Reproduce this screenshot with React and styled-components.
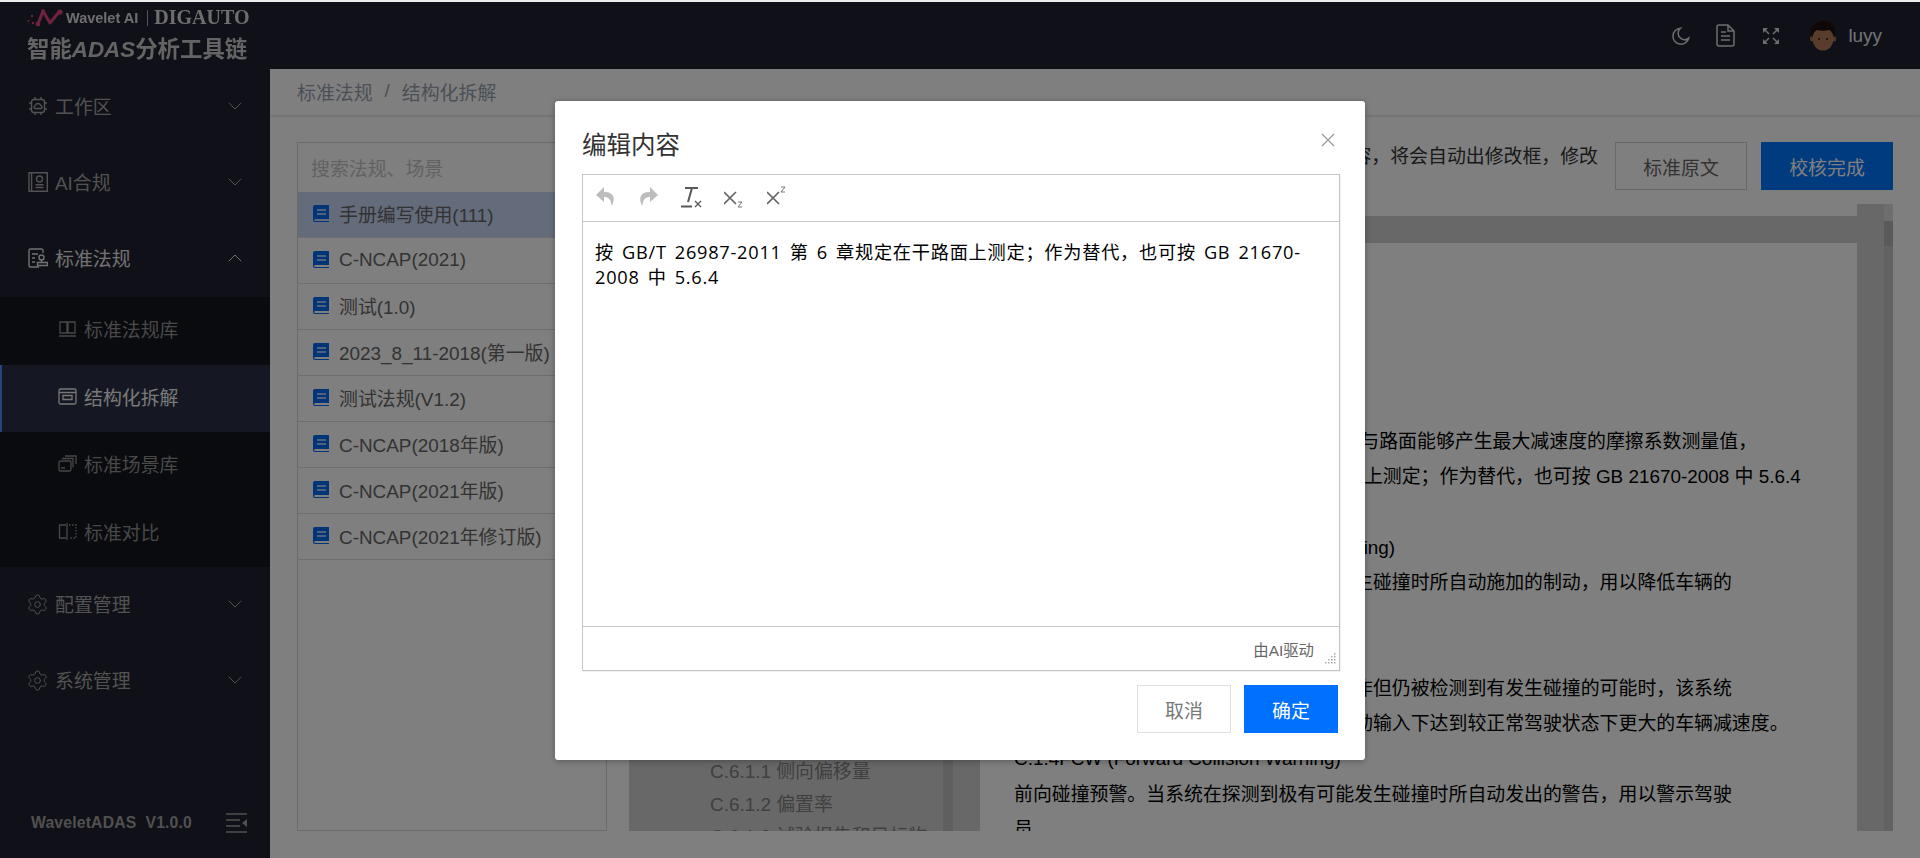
import React from 'react';
import styled, { createGlobalStyle } from 'styled-components';
import { ChevronDown, ChevronUp, Settings } from 'lucide-react';

const sans = `"Liberation Sans", "Noto Sans CJK SC", sans-serif`;

const Global = createGlobalStyle`
  html, body {
    margin: 0;
    height: 100%;
    overflow: hidden;
    background: #fff;
    font-family: ${sans};
  }
  * { box-sizing: border-box; }
`;

const Page = styled.div`
  position: relative;
  height: 858px;
  display: flex;
  flex-direction: column;
  overflow: hidden;
`;
const TopStrip = styled.div`
  height: 2px;
  background: #eeeeee;
  flex: none;
`;
const Header = styled.header`
  height: 67px;
  flex: none;
  background: #202230;
  display: flex;
  align-items: center;
  justify-content: space-between;
`;
const Brand = styled.div`
  padding-left: 27px;
  display: flex;
  flex-direction: column;
  margin-top: -2px;
  filter: blur(0.35px);
`;
const BrandTop = styled.div`
  display: flex;
  align-items: center;
  height: 24px;
  color: #dcdcdc;
`;
const WaveText = styled.span`
  margin-left: 3px;
  font-size: 14.5px;
  font-weight: 700;
`;
const BrandDivider = styled.i`
  width: 1px;
  height: 16px;
  background: #aaa;
  margin: 0 6px 0 9px;
`;
const DigText = styled.span`
  font-family: "Liberation Serif", serif;
  font-size: 20px;
  font-weight: 700;
`;
const BrandTitle = styled.div`
  margin-top: 6px;
  font-size: 22.4px;
  line-height: 28px;
  font-weight: 700;
  color: #c8c8c8;
  white-space: nowrap;
`;
const Tools = styled.div`
  display: flex;
  align-items: center;
  padding-right: 38px;
  color: #e6e6e6;
`;
const ToolIcon = styled.svg`
  flex: none;
  margin-right: ${p => p.$gap}px;
  fill: none;
  stroke: #dcdcdc;
  stroke-width: 1.5;
`;
const Avatar = styled.svg`
  flex: none;
  margin-right: 12px;
`;
const UserName = styled.span`
  font-size: 18.9px;
  color: #e0e6f0;
`;

const Body = styled.div`
  flex: 1;
  display: flex;
  min-height: 0;
`;
const Sidebar = styled.aside`
  width: 270px;
  flex: none;
  background: #202230;
  display: flex;
  flex-direction: column;
`;
const MenuItem = styled.div`
  height: 76px;
  flex: none;
  display: flex;
  align-items: center;
  padding: 0 23px 2px 28px;
  font-size: 18.9px;
  color: ${p => (p.$open ? '#e4e4e4' : '#a4a4a4')};
`;
const MenuIcon = styled.svg`
  width: 20px;
  height: 20px;
  flex: none;
  margin-right: 7px;
  fill: none;
  stroke: currentColor;
  stroke-width: 1.4;
`;
const GearIcon = styled(Settings)`
  flex: none;
  margin: 0 6px 0 -2px;
`;
const MenuLabel = styled.span`
  flex: 1;
  margin-bottom: 2px;
`;
const SubMenu = styled.div`
  background: #14161e;
  flex: none;
`;
const SubItem = styled.div`
  height: 67.5px;
  display: flex;
  align-items: center;
  padding: 0 0 4px 58px;
  font-size: 18.9px;
  color: ${p => (p.$active ? '#f0f0f0' : '#909090')};
  background: ${p => (p.$active ? '#2a3046' : 'transparent')};
  border-left: ${p => (p.$active ? '2px solid #3f8cff' : 'none')};
  ${p => p.$active && 'padding-left: 56px;'}
`;
const SubIcon = styled.svg`
  width: 19px;
  height: 19px;
  flex: none;
  margin-right: 7px;
  fill: none;
  stroke: currentColor;
  stroke-width: 1.3;
`;
const SideFooter = styled.div`
  margin-top: auto;
  height: 66px;
  display: flex;
  align-items: center;
  justify-content: space-between;
  padding: 0 23px 4px 31px;
  font-size: 15.7px;
  font-weight: 700;
  color: #a0a0a0;
  white-space: pre;
  letter-spacing: 0.2px;
`;

const Main = styled.main`
  flex: 1;
  display: flex;
  flex-direction: column;
  min-width: 0;
  background: #fff;
`;
const Crumbs = styled.div`
  height: 46px;
  flex: none;
  display: flex;
  align-items: center;
  gap: 12px;
  padding: 0 0 2px 27px;
  font-size: 18.9px;
  color: #97a0ae;
  box-shadow: 0 1px 3px rgba(0, 0, 0, 0.15);
  strong { font-weight: 400; color: #97a0ae; }
`;
const Workspace = styled.div`
  flex: 1;
  display: flex;
  gap: 22px;
  padding: 27px;
  min-height: 0;
`;
const LawPanel = styled.div`
  width: 310px;
  flex: none;
  border: 1px solid #d6d6d6;
  display: flex;
  flex-direction: column;
`;
const SearchBox = styled.div`
  height: 49px;
  flex: none;
  display: flex;
  align-items: center;
  padding-left: 13px;
  font-size: 18.9px;
  color: #c4c4c4;
`;
const LawRow = styled.div`
  height: 46px;
  flex: none;
  display: flex;
  align-items: center;
  padding: 0 0 2px 15px;
  font-size: 18.9px;
  white-space: nowrap;
  color: #666;
  background: ${p => (p.$selected ? '#c8d8f6' : 'transparent')};
  border-bottom: 1px solid #dcdcdc;
`;
const BookIcon = styled.svg`
  width: 16px;
  height: 17px;
  flex: none;
  margin-right: 10px;
`;
const ReviewColumn = styled.div`
  flex: 1;
  min-width: 0;
  display: flex;
  flex-direction: column;
`;
const ReviewBar = styled.div`
  height: 48px;
  flex: none;
  display: flex;
  justify-content: flex-end;
  gap: 14px;
  margin-bottom: 14px;
`;
const Hint = styled.div`
  font-size: 18.9px;
  line-height: 30px;
  color: #333;
  margin-right: 3px;
  white-space: nowrap;
`;
const BarButton = styled.button`
  width: 132px;
  height: 48px;
  font: inherit;
  font-size: 18.9px;
  padding: 0;
  color: ${p => (p.$primary ? '#fff' : '#666')};
  background: ${p => (p.$primary ? '#0074ff' : '#fff')};
  border: 1px solid ${p => (p.$primary ? '#0074ff' : '#d0d0d0')};
`;
const Split = styled.div`
  flex: 1;
  min-height: 0;
  display: flex;
`;
const TreePane = styled.div`
  width: 351px;
  flex: none;
  background: #d0d0d0;
  display: flex;
  overflow: hidden;
`;
const TreeList = styled.div`
  width: 314px;
  flex: none;
  padding: 552px 0 0 81px;
  font-size: 18.9px;
  line-height: 32.7px;
  color: #808080;
  white-space: nowrap;
`;
const TreeScroll = styled.div`
  width: 10px;
  flex: none;
  background: #bebebe;
`;
const DocPane = styled.div`
  flex: 1;
  min-width: 0;
  display: flex;
`;
const DocSheet = styled.div`
  flex: 1;
  min-width: 0;
  padding-top: 12px;
  overflow: hidden;
`;
const DocBand = styled.div`
  height: 27px;
  background: #d0d0d0;
`;
const DocText = styled.div`
  padding: 181px 0 0 34px;
  font-size: 18.9px;
  line-height: 35.25px;
  color: #000;
  white-space: nowrap;
`;
const DocScroll = styled.div`
  width: 36px;
  flex: none;
  display: flex;
  justify-content: flex-end;
  background: #d0d0d0;
`;
const DocTrack = styled.div`
  width: 9px;
  background: linear-gradient(#dcdcdc 0 17px, #b4b4b4 17px 42px, #c4c4c4 42px);
`;

const Overlay = styled.div`
  position: absolute;
  top: 2px;
  left: 0;
  right: 0;
  bottom: 0;
  background: rgba(0, 0, 0, 0.5);
`;
const Dialog = styled.div`
  position: absolute;
  top: 99px;
  left: 555px;
  width: 810px;
  height: 659px;
  background: #fff;
  border-radius: 3px;
  box-shadow: 0 1px 6px rgba(0, 0, 0, 0.3);
  padding: 0 27px;
  display: flex;
  flex-direction: column;
`;
const DialogHead = styled.div`
  height: 73px;
  flex: none;
  display: flex;
  align-items: center;
  justify-content: space-between;
  padding-top: 12px;
`;
const DialogTitle = styled.h2`
  margin: 0;
  font-size: 24.5px;
  font-weight: 400;
  color: #333;
`;
const CloseIcon = styled.svg`
  width: 14px;
  height: 14px;
  margin: -8px 3px 0 0;
  stroke: #999;
  stroke-width: 1.2;
  fill: none;
`;
const Editor = styled.div`
  width: 758px;
  height: 497px;
  flex: none;
  display: flex;
  flex-direction: column;
  border: 1px solid #c5c5c5;
  box-shadow: 1px 1px 0 rgba(0, 0, 0, 0.05);
`;
const EditorToolbar = styled.div`
  height: 47px;
  flex: none;
  display: flex;
  align-items: center;
  gap: 22px;
  padding: 0 0 2px 12px;
  border-bottom: 1px solid #c5c5c5;
`;
const EditIcon = styled.svg`
  width: 21px;
  height: 22px;
  flex: none;
`;
const EditorArea = styled.div`
  flex: 1;
  padding: 18px 12px;
  font-family: "Open Sans", "Noto Sans CJK SC", sans-serif;
  font-size: 18.2px;
  letter-spacing: 0.75px;
  word-spacing: 2.6px;
  line-height: 25px;
  color: #000;
`;
const StatusBar = styled.div`
  position: relative;
  height: 44px;
  flex: none;
  display: flex;
  align-items: center;
  justify-content: flex-end;
  padding: 0 25px 0 0;
  border-top: 1px solid #c5c5c5;
  font-size: 15.4px;
  color: #666;
`;
const Grip = styled.svg`
  position: absolute;
  right: 2px;
  bottom: 4px;
  width: 14px;
  height: 13px;
`;
const DialogFoot = styled.div`
  display: flex;
  justify-content: flex-end;
  gap: 13px;
  padding-top: 14px;
`;
const DialogButton = styled.button`
  width: 94px;
  height: 48px;
  padding: 0;
  font: inherit;
  font-size: 18.9px;
  color: ${p => (p.$primary ? '#fff' : '#777')};
  background: ${p => (p.$primary ? '#0070ff' : '#fff')};
  border: 1px solid ${p => (p.$primary ? '#0070ff' : '#dcdfe6')};
`;

const laws = [
  '手册编写使用(111)',
  'C-NCAP(2021)',
  '测试(1.0)',
  '2023_8_11-2018(第一版)',
  '测试法规(V1.2)',
  'C-NCAP(2018年版)',
  'C-NCAP(2021年版)',
  'C-NCAP(2021年修订版)',
];

const hintText = '点击需要修改的内容\uFF0C将会自动出修改框\uFF0C修改';
const clauseText = '按 GB/T 26987-2011 第 6 章规定在干路面上测定\uFF1B作为替代\uFF0C也可按 GB 21670-2008 中 5.6.4';

const docLines = [
  'PBC 峰值制动力系数。在规定条件下轮胎与路面能够产生最大减速度的摩擦系数测量值\uFF0C',
  clauseText,
  '规定测定。',
  'C.1.2 AEB (Autonomous Emergency Braking)',
  '自动紧急制动。当系统在探测到有可能发生碰撞时所自动施加的制动\uFF0C用以降低车辆的',
  '碰撞速度。',
  'C.1.3 EBA (Emergency Brake Assist)',
  '紧急制动辅助。当驾驶员已经采取制动操作但仍被检测到有发生碰撞的可能时\uFF0C该系统',
  '将自动辅助驾驶员\uFF0C使车辆能在相同的制动输入下达到较正常驾驶状态下更大的车辆减速度。',
  'C.1.4FCW (Forward Collision Warning)',
  '前向碰撞预警。当系统在探测到极有可能发生碰撞时所自动发出的警告\uFF0C用以警示驾驶',
  '员',
];

const Book = () => (
  <BookIcon viewBox="0 0 16 17">
    <path d="M2 0h14v14H2.2a1 1 0 0 0 0 2H16v1H2a2 2 0 0 1-2-2V2a2 2 0 0 1 2-2z" fill="#0468f0" />
    <path d="M4 5h9M4 9h9" stroke="#cfe0ff" strokeWidth="1.3" />
  </BookIcon>
);

const WaveMark = () => (
  <svg width="36" height="20" viewBox="0 0 36 20" fill="none">
    <path d="M11 16 L16 3 L23 15 L32 4" stroke="#e0447c" strokeWidth="3" strokeLinejoin="round" />
    <circle cx="33" cy="4" r="2.6" fill="#e0447c" />
    <circle cx="11" cy="16" r="2.4" fill="#e0447c" />
    <circle cx="16" cy="3" r="1.8" fill="#e0447c" />
    <circle cx="5" cy="8" r="1.2" fill="#e0447c" />
    <circle cx="1.5" cy="13" r="1" fill="#e0447c" />
    <circle cx="6" cy="15" r="1.2" fill="#e0447c" />
  </svg>
);

export default function App() {
  return (
    <Page>
      <Global />
      <TopStrip />
      <Header>
        <Brand>
          <BrandTop>
            <WaveMark />
            <WaveText>Wavelet AI</WaveText>
            <BrandDivider />
            <DigText>DIGAUTO</DigText>
          </BrandTop>
          <BrandTitle>智能<em>ADAS</em>分析工具链</BrandTitle>
        </Brand>
        <Tools>
          <ToolIcon $gap={26} width="20" height="20" viewBox="0 0 20 20">
            <path d="M10.5 2.2a8 8 0 1 0 8.2 10 6.4 6.4 0 0 1-8.2-10z" />
          </ToolIcon>
          <ToolIcon $gap={27} width="19" height="23" viewBox="0 0 19 23">
            <path d="M3 1h9l6 6v13a2 2 0 0 1-2 2H3a2 2 0 0 1-2-2V3a2 2 0 0 1 2-2z" />
            <path d="M12 1v6h6M5 8h5M5 12h9M5 16h9" />
          </ToolIcon>
          <ToolIcon $gap={30} width="18" height="18" viewBox="0 0 18 18">
            <path d="M1 6V1h5L1 6zM17 6V1h-5l5 5zM1 12v5h5l-5-5zM17 12v5h-5l5-5z" fill="#dcdcdc" stroke="none" />
            <path d="M3 3l4 4M15 3l-4 4M3 15l4-4M15 15l-4-4" />
          </ToolIcon>
          <Avatar width="26" height="30" viewBox="0 0 26 30">
            <circle cx="1.8" cy="18" r="2.4" fill="#a46a4c" />
            <circle cx="24.2" cy="18" r="2.4" fill="#a46a4c" />
            <ellipse cx="13" cy="18" rx="10.5" ry="11.5" fill="#b07858" />
            <path d="M1 15C-1 6 6 0 13 0s14 5 12 15c-2-4-4-6-6-6-3 1-9 1-12 0-3 1-5 3-6 6z" fill="#1c0f0c" />
            <circle cx="9" cy="18" r="1" fill="#2a1710" />
            <circle cx="17" cy="18" r="1" fill="#2a1710" />
            <ellipse cx="13" cy="25" rx="2.4" ry="1.2" fill="#c06a70" />
          </Avatar>
          <UserName>luyy</UserName>
        </Tools>
      </Header>
      <Body>
        <Sidebar>
          <MenuItem>
            <MenuIcon viewBox="0 0 20 20">
              <rect x="3.5" y="3.5" width="13" height="13" rx="2.5" />
              <path d="M7 1v2.500M13 1v2.500M7 16.500V19M13 16.500V19M1 7h2.500M1 13h2.500M16.500 7H19M16.500 13H19" />
              <path d="M7 12.500a1.600 1.600 0 0 1 .3-3.100 2.800 2.800 0 0 1 5.300 0 1.600 1.600 0 0 1 .3 3.100z" />
            </MenuIcon>
            <MenuLabel>工作区</MenuLabel>
            <ChevronDown size={24} strokeWidth={1} />
          </MenuItem>
          <MenuItem>
            <MenuIcon viewBox="0 0 20 20">
              <path d="M1 .7h18.300v18.600H1z" />
              <path d="M3.600.7v18.600" />
              <circle cx="11.500" cy="7" r="3" />
              <path d="M7.500 12.700h8M7.500 15.500h8" />
            </MenuIcon>
            <MenuLabel>AI合规</MenuLabel>
            <ChevronDown size={24} strokeWidth={1} />
          </MenuItem>
          <MenuItem $open>
            <MenuIcon viewBox="0 0 20 20">
              <path d="M15 5V2.500A1.500 1.500 0 0 0 13.500 1h-11A1.500 1.500 0 0 0 1 2.500v15A1.500 1.500 0 0 0 2.500 19H11" />
              <path d="M4 6h6M4 10h3M4 14h3" />
              <circle cx="13.500" cy="9.500" r="2.500" />
              <path d="M13.500 12v2.500H9.500v3h10v-3h-6" />
            </MenuIcon>
            <MenuLabel>标准法规</MenuLabel>
            <ChevronUp size={24} strokeWidth={1} />
          </MenuItem>
          <SubMenu>
            <SubItem>
              <SubIcon viewBox="0 0 19 19">
                <path d="M2 3h7v11H2zM10 3h7v11h-7zM1 17h17" />
              </SubIcon>
              标准法规库
            </SubItem>
            <SubItem $active>
              <SubIcon viewBox="0 0 19 19">
                <rect x="1" y="2" width="17" height="15" rx="1.500" />
                <path d="M1 5.500h17M5 8.500h9v4H5z" />
              </SubIcon>
              结构化拆解
            </SubItem>
            <SubItem>
              <SubIcon viewBox="0 0 19 19">
                <rect x="1" y="7" width="12" height="10" rx="1.500" />
                <path d="M4 4.500h11v9M7 2h11v8M3 14h4" />
              </SubIcon>
              标准场景库
            </SubItem>
            <SubItem>
              <SubIcon viewBox="0 0 19 19">
                <path d="M8 3H1.500v13H8M9 1v17" />
                <path d="M11 3h7v13h-7" strokeDasharray="1.500 1.500" />
              </SubIcon>
              标准对比
            </SubItem>
          </SubMenu>
          <MenuItem>
            <GearIcon size={23} strokeWidth={1} />
            <MenuLabel>配置管理</MenuLabel>
            <ChevronDown size={24} strokeWidth={1} />
          </MenuItem>
          <MenuItem>
            <GearIcon size={23} strokeWidth={1} />
            <MenuLabel>系统管理</MenuLabel>
            <ChevronDown size={24} strokeWidth={1} />
          </MenuItem>
          <SideFooter>
            <span>WaveletADAS  V1.0.0</span>
            <svg width="21" height="20" viewBox="0 0 21 20" fill="none" stroke="#a0a0a0" strokeWidth="1.6">
              <path d="M0 1h21M0 7h14M0 13h14M0 19h21" />
              <path d="M21 6v8l-5-4z" fill="#a0a0a0" stroke="none" />
            </svg>
          </SideFooter>
        </Sidebar>
        <Main>
          <Crumbs>
            <span>标准法规</span>
            <span>/</span>
            <strong>结构化拆解</strong>
          </Crumbs>
          <Workspace>
            <LawPanel>
              <SearchBox>搜索法规、场景</SearchBox>
              {laws.map((name, i) => (
                <LawRow key={name} $selected={i === 0}>
                  <Book />
                  {name}
                </LawRow>
              ))}
            </LawPanel>
            <ReviewColumn>
              <ReviewBar>
                <Hint>{hintText}</Hint>
                <BarButton>标准原文</BarButton>
                <BarButton $primary>校核完成</BarButton>
              </ReviewBar>
              <Split>
                <TreePane>
                  <TreeList>
                    <div>C.6.1.1 侧向偏移量</div>
                    <div>C.6.1.2 偏置率</div>
                    <div>C.6.1.3 试验报告和目标物</div>
                  </TreeList>
                  <TreeScroll />
                </TreePane>
                <DocPane>
                  <DocSheet>
                    <DocBand />
                    <DocText>
                      {docLines.map(line => (
                        <div key={line}>{line}</div>
                      ))}
                    </DocText>
                  </DocSheet>
                  <DocScroll>
                    <DocTrack />
                  </DocScroll>
                </DocPane>
              </Split>
            </ReviewColumn>
          </Workspace>
        </Main>
      </Body>
      <Overlay>
        <Dialog>
          <DialogHead>
            <DialogTitle>编辑内容</DialogTitle>
            <CloseIcon viewBox="0 0 14 14">
              <path d="M1 1l12 12M13 1L1 13" />
            </CloseIcon>
          </DialogHead>
          <Editor>
            <EditorToolbar>
              <EditIcon viewBox="0 0 21 22">
                <path d="M9 1L1 9l8 7v-5c5 0 7 2.500 7.500 9C21 13 19 5.500 9 6z" fill="#bdbdbd" />
              </EditIcon>
              <EditIcon viewBox="0 0 21 22">
                <path d="M12 1l8 8-8 7v-5c-5 0-7 2.500-7.500 9C0 13 2 5.500 12 6z" fill="#bdbdbd" />
              </EditIcon>
              <EditIcon viewBox="0 0 21 22">
                <path d="M4 2h13M11 2L7 16M0 20.500h11" stroke="#595959" strokeWidth="2" fill="none" />
                <path d="M14 15l6 6M20 15l-6 6" stroke="#595959" strokeWidth="1.300" fill="none" />
              </EditIcon>
              <EditIcon viewBox="0 0 21 22">
                <path d="M0 6l12 12M12 6L0 18" stroke="#666" strokeWidth="1.700" fill="none" />
                <path d="M14 16h4l-4 5h4" stroke="#777" strokeWidth="1" fill="none" />
              </EditIcon>
              <EditIcon viewBox="0 0 21 22">
                <path d="M0 6l12 12M12 6L0 18" stroke="#666" strokeWidth="1.700" fill="none" />
                <path d="M14 1h4l-4 5h4" stroke="#777" strokeWidth="1" fill="none" />
              </EditIcon>
            </EditorToolbar>
            <EditorArea>{clauseText.replace('21670-', '21670-\u200B')}</EditorArea>
            <StatusBar>
              由AI驱动
              <Grip viewBox="0 0 14 13" fill="#aaa">
                <rect x="11" y="0" width="1.500" height="1.500" />
                <rect x="8" y="3" width="1.500" height="1.500" />
                <rect x="11" y="3" width="1.500" height="1.500" />
                <rect x="5" y="6" width="1.500" height="1.500" />
                <rect x="8" y="6" width="1.500" height="1.500" />
                <rect x="11" y="6" width="1.500" height="1.500" />
                <rect x="2" y="9" width="1.500" height="1.500" />
                <rect x="5" y="9" width="1.500" height="1.500" />
                <rect x="8" y="9" width="1.500" height="1.500" />
                <rect x="11" y="9" width="1.500" height="1.500" />
              </Grip>
            </StatusBar>
          </Editor>
          <DialogFoot>
            <DialogButton>取消</DialogButton>
            <DialogButton $primary>确定</DialogButton>
          </DialogFoot>
        </Dialog>
      </Overlay>
    </Page>
  );
}
